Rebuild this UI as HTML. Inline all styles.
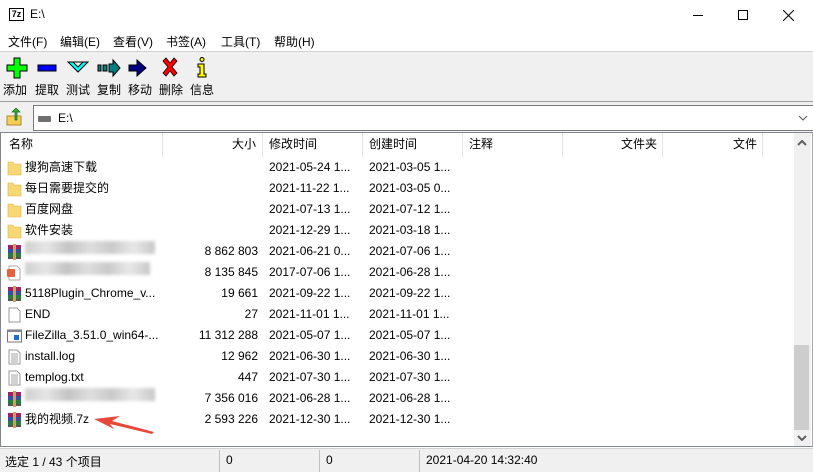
<!DOCTYPE html>
<html><head><meta charset="utf-8"><style>
*{margin:0;padding:0;box-sizing:border-box}
body{width:813px;height:472px;overflow:hidden;background:#fff;font-family:"Liberation Sans","Noto Sans CJK SC",sans-serif;font-size:12px;color:#000;position:relative}
.a{position:absolute}
.row{position:absolute;left:2px;width:790px;height:21px;line-height:21px;white-space:nowrap}
.row span{position:absolute}
.blur{display:inline-block;height:13px;background:linear-gradient(90deg,#d0d0d0,#e6e6e6,#c4c4c4,#dedede,#cacaca,#e8e8e8,#c8c8c8);filter:blur(1.5px);vertical-align:middle}
.ico{position:absolute;left:5px;top:3px;width:15px;height:16px}
</style></head><body>
<div class="a" style="left:9px;top:8px;width:15px;height:13px;border:1px solid #000;font:bold 9px 'Liberation Sans';line-height:11px;text-align:center">7z</div>
<div class="a" style="left:30px;top:7px;font-size:12px">E:\</div>
<div class="a" style="left:693px;top:15px;width:10px;height:1px;background:#000"></div>
<div class="a" style="left:738px;top:10px;width:10px;height:10px;border:1px solid #000"></div>
<svg class="a" style="left:783px;top:10px" width="11" height="11"><path d="M0 0L11 11M11 0L0 11" stroke="#000" stroke-width="1"/></svg>
<div class="a" style="left:8px;top:33px">文件(F)</div>
<div class="a" style="left:60px;top:33px">编辑(E)</div>
<div class="a" style="left:113px;top:33px">查看(V)</div>
<div class="a" style="left:166px;top:33px">书签(A)</div>
<div class="a" style="left:221px;top:33px">工具(T)</div>
<div class="a" style="left:274px;top:33px">帮助(H)</div>
<div class="a" style="left:0;top:51px;width:813px;height:51px;background:#f0f0f0;border-top:1px solid #d0d0d0;border-bottom:1px solid #a0a0a0"></div>
<svg class="a" style="left:5px;top:57px" width="210" height="22">
<path d="M9 1h6v7h7v6h-7v7H9v-7H2V8h7z" fill="#00ff00" stroke="#000"/>
<rect x="33" y="8" width="18" height="6" fill="#0000ff" stroke="#000"/>
<path d="M63 5h20l-10 10z M68 5l5 5 5-5" fill="#00ffff" stroke="#000"/>
<rect x="93" y="8" width="3" height="6" fill="#008080" stroke="#000"/><rect x="98" y="8" width="4" height="6" fill="#008080" stroke="#000"/><path d="M104 7h4V3l7 8-7 8v-4h-4z" fill="#008080" stroke="#000"/>
<path d="M124 8h8V3l9 8-9 8v-5h-8z" fill="#000080" stroke="#000"/>
<path d="M158 4l3-3 4 5 4-5 3 3-5 6 5 6-3 3-4-5-4 5-3-3 5-6z" fill="#ff0000" stroke="#000" stroke-width=".8"/>
<circle cx="197" cy="2.5" r="2" fill="#ff0" stroke="#000"/><path d="M193 7h6v10h2v3h-8v-3h2v-7h-2z" fill="#ff0" stroke="#000"/>
</svg>
<div class="a" style="left:3px;top:81px">添加</div>
<div class="a" style="left:35px;top:81px">提取</div>
<div class="a" style="left:66px;top:81px">测试</div>
<div class="a" style="left:97px;top:81px">复制</div>
<div class="a" style="left:128px;top:81px">移动</div>
<div class="a" style="left:159px;top:81px">删除</div>
<div class="a" style="left:190px;top:81px">信息</div>
<div class="a" style="left:0;top:102px;width:813px;height:30px;background:#f0f0f0"></div>
<svg class="a" style="left:6px;top:108px" width="18" height="18"><path d="M1 8h14v9H1z" fill="#f3cf5a" stroke="#b08a20"/><path d="M9 12V4H6l4-4 4 4h-3v8z" fill="#3aa83a" stroke="#1b6b1b" stroke-width=".7"/></svg>
<div class="a" style="left:33px;top:105px;width:780px;height:26px;background:#fff;border:1px solid #7a7a7a;border-right:none"></div>
<div class="a" style="left:38px;top:116px;width:13px;height:6px;background:#707070;border-radius:1px"></div>
<div class="a" style="left:58px;top:111px">E:\</div>
<svg class="a" style="left:798px;top:115px" width="10" height="6"><path d="M1 1l4 4 4-4" stroke="#555" fill="none"/></svg>
<div class="a" style="left:0;top:132px;width:813px;height:315px;border:1px solid #828790;border-right:1px solid #aaa"></div>
<div class="a" style="top:135px;left:9px">名称</div>
<div class="a" style="top:135px;left:232px">大小</div>
<div class="a" style="top:135px;left:269px">修改时间</div>
<div class="a" style="top:135px;left:369px">创建时间</div>
<div class="a" style="top:135px;left:469px">注释</div>
<div class="a" style="top:135px;left:621px">文件夹</div>
<div class="a" style="top:135px;left:733px">文件</div>
<div class="a" style="left:162px;top:133px;width:1px;height:24px;background:#e5e5e5"></div>
<div class="a" style="left:262px;top:133px;width:1px;height:24px;background:#e5e5e5"></div>
<div class="a" style="left:362px;top:133px;width:1px;height:24px;background:#e5e5e5"></div>
<div class="a" style="left:462px;top:133px;width:1px;height:24px;background:#e5e5e5"></div>
<div class="a" style="left:562px;top:133px;width:1px;height:24px;background:#e5e5e5"></div>
<div class="a" style="left:662px;top:133px;width:1px;height:24px;background:#e5e5e5"></div>
<div class="a" style="left:762px;top:133px;width:1px;height:24px;background:#e5e5e5"></div>
<div class="a" style="left:794px;top:133px;width:17px;height:313px;background:#f0f0f0"></div>
<div class="a" style="left:794px;top:345px;width:15px;height:85px;background:#cdcdcd"></div>
<svg class="a" style="left:797px;top:140px" width="10" height="6"><path d="M1 5l4-4 4 4" stroke="#606060" stroke-width="2" fill="none"/></svg>
<svg class="a" style="left:797px;top:435px" width="10" height="6"><path d="M1 1l4 4 4-4" stroke="#606060" stroke-width="2" fill="none"/></svg>
<div id="rows"></div>
<script>
var R=[
["f","搜狗高速下载","","2021-05-24 1...","2021-03-05 1..."],
["f","每日需要提交的","","2021-11-22 1...","2021-03-05 0..."],
["f","百度网盘","","2021-07-13 1...","2021-07-12 1..."],
["f","软件安装","","2021-12-29 1...","2021-03-18 1..."],
["r","#130","8 862 803","2021-06-21 0...","2021-07-06 1..."],
["p","#125","8 135 845","2017-07-06 1...","2021-06-28 1..."],
["r","5118Plugin_Chrome_v...","19 661","2021-09-22 1...","2021-09-22 1..."],
["d","END","27","2021-11-01 1...","2021-11-01 1..."],
["e","FileZilla_3.51.0_win64-...","11 312 288","2021-05-07 1...","2021-05-07 1..."],
["t","install.log","12 962","2021-06-30 1...","2021-06-30 1..."],
["t","templog.txt","447","2021-07-30 1...","2021-07-30 1..."],
["r","#130","7 356 016","2021-06-28 1...","2021-06-28 1..."],
["r","我的视频.7z","2 593 226","2021-12-30 1...","2021-12-30 1..."]];
var ic={
f:'<svg class="ico" viewBox="0 0 15 16"><path d="M1 2h5l1 2h7v11H1z" fill="#f8d775" stroke="#e0b440" stroke-width=".6"/></svg>',
r:'<svg class="ico" viewBox="0 0 15 16"><rect x="1" y="1" width="13" height="4" fill="#a0206a"/><rect x="1" y="5" width="13" height="4" fill="#3050b0"/><rect x="1" y="9" width="13" height="4" fill="#208040"/><rect x="1" y="13" width="13" height="2" fill="#555"/><rect x="6" y="0" width="3" height="16" fill="#c8a060"/></svg>',
p:'<svg class="ico" viewBox="0 0 15 16"><path d="M2 1h8l3 3v11H2z" fill="#fff" stroke="#aaa"/><rect x="0" y="4" width="8" height="8" rx="1" fill="#e8613c"/></svg>',
d:'<svg class="ico" viewBox="0 0 15 16"><path d="M2 1h8l3 3v11H2z" fill="#fff" stroke="#999"/></svg>',
t:'<svg class="ico" viewBox="0 0 15 16"><path d="M2 1h8l3 3v11H2z" fill="#fff" stroke="#999"/><path d="M4 5h7M4 7h7M4 9h7M4 11h7M4 13h7" stroke="#888" stroke-width=".8"/></svg>',
e:'<svg class="ico" viewBox="0 0 15 16"><rect x="0.5" y="2" width="14" height="12" fill="#fff" stroke="#777"/><rect x="0.5" y="2" width="14" height="2" fill="#888"/><rect x="7" y="7" width="5" height="5" fill="#1a6fd0"/></svg>'};
var h='';
R.forEach(function(r,i){var y=157+i*21;var n=r[1].charAt(0)=='#'?'<span style="left:23px;top:0"><span class="blur" style="width:'+r[1].slice(1)+'px"></span></span>':'<span style="left:23px">'+r[1]+'</span>';
h+='<div class="row" style="top:'+y+'px">'+ic[r[0]]+n+'<span style="right:534px">'+r[2]+'</span><span style="left:267px">'+r[3]+'</span><span style="left:367px">'+r[4]+'</span></div>';});
document.getElementById('rows').innerHTML=h;
</script>
<svg class="a" style="left:90px;top:412px" width="70" height="24"><path d="M4 7L30 4 22 9 64 20 62 22 20 12 24 17z" fill="#e8473a"/></svg>
<div class="a" style="left:0;top:448px;width:813px;height:24px;background:#f0f0f0;border-top:1px solid #d0d0d0"></div>
<div class="a" style="left:5px;top:453px">选定 1 / 43 个项目</div>
<div class="a" style="left:219px;top:450px;width:1px;height:22px;background:#c0c0c0"></div>
<div class="a" style="left:226px;top:453px">0</div>
<div class="a" style="left:319px;top:450px;width:1px;height:22px;background:#c0c0c0"></div>
<div class="a" style="left:326px;top:453px">0</div>
<div class="a" style="left:419px;top:450px;width:1px;height:22px;background:#c0c0c0"></div>
<div class="a" style="left:426px;top:453px">2021-04-20 14:32:40</div>
</body></html>
